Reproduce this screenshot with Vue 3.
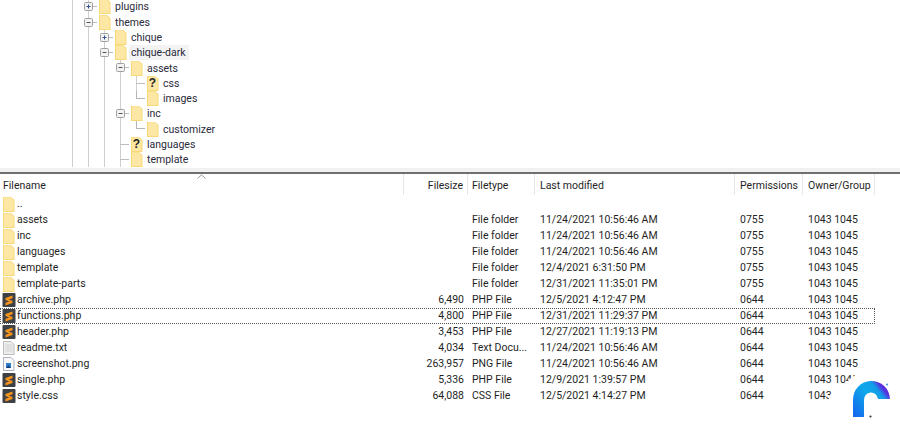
<script setup>
const tree = [
  { guides: ['v', 't'], exp: '+', icon: 'f', name: 'plugins' },
  { guides: ['v', 't'], exp: '-', icon: 'f', name: 'themes' },
  { guides: ['v', 'v', 't'], exp: '+', icon: 'f', name: 'chique' },
  { guides: ['v', 'v', 't'], exp: '-', icon: 'f', name: 'chique-dark', hl: true },
  { guides: ['v', 'v', 'v', 't'], exp: '-', icon: 'f', name: 'assets' },
  { guides: ['v', 'v', 'v', 'v', 't'], icon: 'q', name: 'css' },
  { guides: ['v', 'v', 'v', 'v', 'l'], icon: 'f', name: 'images' },
  { guides: ['v', 'v', 'v', 't'], exp: '-', icon: 'f', name: 'inc' },
  { guides: ['v', 'v', 'v', 'v', 'l'], icon: 'f', name: 'customizer' },
  { guides: ['v', 'v', 'v', 't'], icon: 'q', name: 'languages' },
  { guides: ['v', 'v', 'v', 't'], icon: 'f', name: 'template' }
]
const files = [
  { n: '..', i: 'f' },
  { n: 'assets', i: 'f', t: 'File folder', d: '11/24/2021 10:56:46 AM', p: '0755', o: '1043 1045' },
  { n: 'inc', i: 'f', t: 'File folder', d: '11/24/2021 10:56:46 AM', p: '0755', o: '1043 1045' },
  { n: 'languages', i: 'f', t: 'File folder', d: '11/24/2021 10:56:46 AM', p: '0755', o: '1043 1045' },
  { n: 'template', i: 'f', t: 'File folder', d: '12/4/2021 6:31:50 PM', p: '0755', o: '1043 1045' },
  { n: 'template-parts', i: 'f', t: 'File folder', d: '12/31/2021 11:35:01 PM', p: '0755', o: '1043 1045' },
  { n: 'archive.php', i: 's', s: '6,490', t: 'PHP File', d: '12/5/2021 4:12:47 PM', p: '0644', o: '1043 1045' },
  { n: 'functions.php', i: 's', s: '4,800', t: 'PHP File', d: '12/31/2021 11:29:37 PM', p: '0644', o: '1043 1045', sel: true },
  { n: 'header.php', i: 's', s: '3,453', t: 'PHP File', d: '12/27/2021 11:19:13 PM', p: '0644', o: '1043 1045' },
  { n: 'readme.txt', i: 't', s: '4,034', t: 'Text Docu...', d: '11/24/2021 10:56:46 AM', p: '0644', o: '1043 1045' },
  { n: 'screenshot.png', i: 'p', s: '263,957', t: 'PNG File', d: '11/24/2021 10:56:46 AM', p: '0644', o: '1043 1045' },
  { n: 'single.php', i: 's', s: '5,336', t: 'PHP File', d: '12/9/2021 1:39:57 PM', p: '0644', o: '1043 1045' },
  { n: 'style.css', i: 's', s: '64,088', t: 'CSS File', d: '12/5/2021 4:14:27 PM', p: '0644', o: '1043 1045' }
]
const columns = [
  { label: 'Filename', cls: 'c-name' },
  { label: 'Filesize', cls: 'c-size' },
  { label: 'Filetype', cls: 'c-type' },
  { label: 'Last modified', cls: 'c-date' },
  { label: 'Permissions', cls: 'c-perm' },
  { label: 'Owner/Group', cls: 'c-own' }
]
</script>

<template>
  <div class="page">
    <section class="tree">
      <div v-for="r in tree" :key="r.name" class="tree-row">
        <span v-for="(g, i) in r.guides" :key="i" class="guide" :class="'g-' + g">
          <span v-if="i === r.guides.length - 1 && r.exp" class="exp">
            <svg width="9" height="9" viewBox="0 0 9 9">
              <rect x="0.5" y="0.5" width="8" height="8" rx="1" fill="#f2f2f2" stroke="#a0a0a0" />
              <path v-if="r.exp === '+'" d="M2.5 4.5h4M4.500 2.500v4" stroke="#33518c" fill="none" />
              <path v-else d="M2.5 4.5h4" stroke="#555" fill="none" />
            </svg>
          </span>
        </span>
        <span class="tree-icon">
          <svg width="12" height="15" viewBox="0 0 12 15">
            <path d="M0 0h8l3.500 3v12H0z" fill="#f8d877" />
            <path d="M1 0.500h6.500l3 2.800V14H1z" fill="#fde7a4" />
          </svg>
          <span v-if="r.icon === 'q'" class="q">?</span>
        </span>
        <span class="tree-label" :class="{ hl: r.hl }">{{ r.name }}</span>
      </div>
    </section>
    <div class="split"></div>
    <section class="list">
      <header class="head">
        <div v-for="c in columns" :key="c.label" class="hcell" :class="c.cls">{{ c.label }}</div>
        <svg class="sort" width="9" height="5" viewBox="0 0 9 5">
          <path d="M0.5 4.5L4.5 0.8L8.5 4.5" fill="none" stroke="#9a9a9a" />
        </svg>
      </header>
      <div class="rows">
        <div v-for="f in files" :key="f.n" class="row" :class="{ sel: f.sel }">
          <div class="cell c-name">
            <svg v-if="f.i === 'f'" class="ficon" width="14" height="15" viewBox="0 0 14 15">
              <path d="M1 0h8l3.500 3v12H1z" fill="#f8d877" />
              <path d="M2 0.500h6.500l3 2.800V14H2z" fill="#fde7a4" />
            </svg>
            <svg v-else-if="f.i === 's'" class="ficon" width="14" height="14" viewBox="0 0 14 14">
              <rect x="0.500" y="0" width="13" height="14" rx="1" fill="#3d4044" />
              <path d="M3.500 5L10.500 2.500V5.200L6.800 6.500L10.500 8V10L3.500 12.500V9.800L7.200 8.500L3.500 7z" fill="#f7941d" />
            </svg>
            <svg v-else-if="f.i === 't'" class="ficon" width="14" height="14" viewBox="0 0 14 14">
              <path d="M1.500 0.500h7.500l3 3v10H1.500z" fill="#ededed" stroke="#bcbcbc" />
              <path d="M3.500 4h7M3.500 6h7M3.500 8h7M3.500 10h7" stroke="#d2d2d2" />
            </svg>
            <svg v-else class="ficon" width="14" height="14" viewBox="0 0 14 14">
              <path d="M1.500 0.500h7.500l3 3v10H1.500z" fill="#f8f8fa" stroke="#a8b0bc" />
              <rect x="4" y="6" width="5" height="5" fill="#2f7fd0" />
              <path d="M4 11l2.500-3 2.500 3z" fill="#123f7a" />
            </svg>
            <span class="fname">{{ f.n }}</span>
          </div>
          <div class="cell c-size">{{ f.s }}</div>
          <div class="cell c-type">{{ f.t }}</div>
          <div class="cell c-date">{{ f.d }}</div>
          <div class="cell c-perm">{{ f.p }}</div>
          <div class="cell c-own">{{ f.o }}</div>
        </div>
      </div>
    </section>
    <svg class="logo" width="75" height="58" viewBox="0 0 75 58">
      <defs>
        <linearGradient id="arc" gradientUnits="userSpaceOnUse" x1="28" y1="47" x2="65" y2="18">
          <stop offset="0" stop-color="#1463ee" />
          <stop offset="0.55" stop-color="#0ea8ea" />
          <stop offset="0.76" stop-color="#129ee8" />
          <stop offset="0.88" stop-color="#5a2fe0" />
        </linearGradient>
      </defs>
      <path d="M30 5L4 26V58H75V5Z" fill="#fff" />
      <path d="M28 47V30A18.500 18.500 0 0 1 65 29H53A7 7 0 0 0 39 30V47Z" fill="url(#arc)" />
      <circle cx="62" cy="14.500" r="1" fill="#3a9be0" />
      <circle cx="45.500" cy="46.500" r="1.100" fill="#333" />
    </svg>
  </div>
</template>

<style>
html, body { margin: 0; background: #fff; }
</style>

<style scoped>
.page {
  position: relative;
  width: 900px;
  height: 428px;
  overflow: hidden;
  background: #fff;
  color: #1f1f1f;
  font-family: Roboto, "Open Sans", sans-serif;
  font-size: 10.5px;
}
.tree {
  height: 168px;
  padding-left: 64px;
  box-sizing: border-box;
  overflow: hidden;
}
.tree-row {
  display: flex;
  align-items: center;
  height: 15.27px;
}
.tree-row:first-child { margin-top: -0.7px; }
.guide {
  position: relative;
  flex: none;
  width: 16px;
  align-self: stretch;
}
.guide::before, .guide::after {
  content: "";
  position: absolute;
}
.g-v::before { left: 8px; top: 0; bottom: 0; border-left: 1px solid #cfcfcf; }
.g-t::before { left: 8px; top: 0; bottom: 0; border-left: 1px solid #cfcfcf; }
.g-t::after { left: 8px; top: 7px; width: 9px; border-top: 1px solid #bdbdbd; }
.g-l::before { left: 8px; top: 0; height: 8px; border-left: 1px solid #b5b5b5; }
.g-l::after { left: 8px; top: 7px; width: 9px; border-top: 1px solid #b5b5b5; }
.exp {
  position: absolute;
  z-index: 1;
  left: 4px;
  top: 3px;
  display: flex;
}
.tree-icon {
  position: relative;
  flex: none;
  width: 19px;
  height: 15px;
  padding-left: 3px;
  box-sizing: border-box;
}
.tree-icon svg { display: block; }
.q {
  position: absolute;
  left: 3px;
  top: 0;
  width: 11px;
  text-align: center;
  font: 700 12px/15px "Liberation Sans", sans-serif;
  color: #222;
}
.tree-label { line-height: 15px; white-space: nowrap; color: #2a2a3a; }
.tree-label.hl { background: #f3f3f3; margin-left: -2px; padding: 0 3px 0 2px; }
.split {
  height: 6px;
  box-sizing: border-box;
  background: #f1f1f1;
  border-bottom: 2px solid #6f6f6f;
}
.head {
  position: relative;
  display: flex;
  height: 21px;
  align-items: stretch;
}
.sort { position: absolute; left: 197px; top: 0; }
.hcell {
  box-sizing: border-box;
  line-height: 24px;
  border-right: 1px solid #e6e6e6;
  white-space: nowrap;
}
.rows { padding-top: 1px; }
.row {
  display: flex;
  height: 16px;
  box-sizing: border-box;
  line-height: 16px;
  width: 875px;
}
.row.sel { outline: 1px dotted #555; outline-offset: -1px; }
.cell { box-sizing: border-box; white-space: nowrap; }
.c-name { width: 404px; padding-left: 2px; display: flex; align-items: center; gap: 1px; }
.hcell.c-name { display: block; padding-left: 3px; }
.fname { line-height: 16px; }
.c-size { width: 64px; padding-right: 4px; text-align: right; }
.c-type { width: 67px; padding-left: 4px; }
.c-date { width: 200px; padding-left: 5px; }
.c-perm { width: 68px; padding-left: 5px; }
.c-own { width: 72px; padding-left: 5px; }
.ficon { display: block; flex: none; }
.logo { position: absolute; right: 0; bottom: 0; }
</style>
